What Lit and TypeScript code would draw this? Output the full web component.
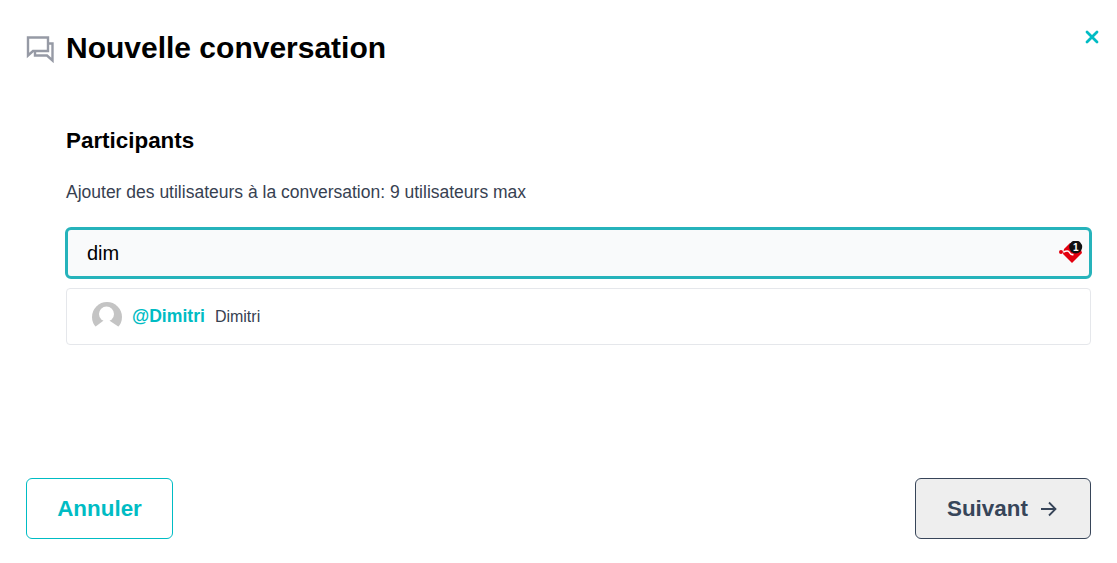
import { LitElement, html, css } from 'lit';
import { customElement, state } from 'lit/decorators.js';

@customElement('app-root')
export class AppRoot extends LitElement {
  @state() query = 'dim';

  static styles = css`
    :host {
      display: block;
      height: 563px;
      box-sizing: border-box;
      padding: 24px 26px 24px 26px;
      background: #fff;
      font-family: 'Liberation Sans', Arial, sans-serif;
      color: #000;
      overflow: hidden;
    }
    .dialog {
      height: 515px;
      display: flex;
      flex-direction: column;
    }
    .header {
      display: flex;
      align-items: center;
      height: 48px;
      gap: 12px;
    }
    .header-icon {
      width: 28px;
      height: 28px;
      flex: none;
      margin-top: 2px;
    }
    h1 {
      flex: 1;
      margin: 0;
      font-size: 30px;
      line-height: 48px;
      font-weight: 700;
    }
    .close {
      align-self: flex-start;
      width: 14px;
      height: 14px;
      margin: 6px -8px 0 0;
      padding: 0;
      border: 0;
      background: none;
      display: block;
    }
    .content {
      flex: 1;
      margin-left: 40px;
      padding-top: 55px;
    }
    h2 {
      margin: 0;
      font-size: 22.4px;
      line-height: 28px;
      font-weight: 700;
    }
    .hint {
      margin: 25px 0 0;
      font-size: 17.5px;
      line-height: 24px;
      color: #374151;
    }
    .field {
      position: relative;
      margin-top: 23px;
    }
    input {
      display: block;
      width: calc(100% + 2px);
      height: 52px;
      margin: 0 -1px;
      box-sizing: border-box;
      padding: 0 19px;
      border: 3px solid #26b3bb;
      border-radius: 6px;
      background: #f9fafb;
      outline: none;
      font: 20px 'Liberation Sans', Arial, sans-serif;
      color: #000;
    }
    .tag {
      position: absolute;
      right: 7px;
      top: 14px;
      width: 26px;
      height: 24px;
    }
    .results {
      margin-top: 9px;
      height: 57px;
      box-sizing: border-box;
      display: flex;
      align-items: center;
      gap: 10px;
      padding: 0 25px;
      border: 1px solid #e5e7eb;
      border-radius: 4px;
    }
    .avatar {
      width: 30px;
      height: 30px;
      flex: none;
    }
    .handle {
      font-size: 17.6px;
      font-weight: 700;
      color: #00bcc4;
    }
    .name {
      font-size: 16px;
      color: #374151;
    }
    .footer {
      display: flex;
      justify-content: space-between;
      align-items: center;
    }
    button.action {
      height: 61px;
      box-sizing: border-box;
      border-radius: 6px;
      font: 700 22.4px 'Liberation Sans', Arial, sans-serif;
      display: flex;
      align-items: center;
      padding: 0 31px;
    }
    .cancel {
      width: 147px;
      justify-content: center;
      border: 1px solid #00bcc4;
      background: #fff;
      color: #00bcc4;
    }
    .next {
      width: 176px;
      gap: 12px;
      border: 1px solid #374559;
      background: #eeeeee;
      color: #374559;
    }
    .next svg {
      width: 18px;
      height: 18px;
    }
  `;

  render() {
    return html`
      <div class="dialog">
        <div class="header">
          <svg class="header-icon" viewBox="0 0 28 28" fill="none" stroke="#969aa5" stroke-width="2.4">
            <path d="M2 2.500h20v13.500H7l-5 4.500z" />
            <path d="M22 8.500h4.500v17l-5.500-5H9v-4" />
          </svg>
          <h1>Nouvelle conversation</h1>
          <svg class="close" viewBox="0 0 14 14" stroke="#00bcc4" stroke-width="2.800" stroke-linecap="round">
            <path d="M2 2l10 10M12 2L2 12" />
          </svg>
        </div>
        <div class="content">
          <h2>Participants</h2>
          <p class="hint">Ajouter des utilisateurs à la conversation: 9 utilisateurs max</p>
          <div class="field">
            <input type="text" .value=${this.query} />
            <svg class="tag" viewBox="0 0 26 24">
              <circle cx="3" cy="11" r="2" fill="#e3000f" />
              <path d="M6 8l6-6h9l3 10-10 10-9-9z" fill="#e3000f" />
              <path d="M5.500 11c3-1.500 5-1.500 6 .5s2 2.500 4 2" fill="none" stroke="#fff" stroke-width="1.500" />
              <circle cx="17.700" cy="6" r="6.500" fill="#111" />
              <text x="17.700" y="9.500" font-size="10" font-weight="700" fill="#fff" text-anchor="middle"
                font-family="Liberation Sans">1</text>
            </svg>
          </div>
          <div class="results">
            <svg class="avatar" viewBox="0 0 30 30">
              <circle cx="15" cy="15" r="15" fill="#c4c4c4" />
              <circle cx="14.500" cy="12" r="7.500" fill="#fff" />
              <path d="M3 25l8-6h7l9 6v5H3z" fill="#fff" />
            </svg>
            <span class="handle">@Dimitri</span>
            <span class="name">Dimitri</span>
          </div>
        </div>
        <div class="footer">
          <button class="action cancel">Annuler</button>
          <button class="action next">
            Suivant
            <svg viewBox="0 0 18 18" fill="none" stroke="#374559" stroke-width="1.800">
              <path d="M1 9h15M9 2.500l6.500 6.500-6.500 6.500" />
            </svg>
          </button>
        </div>
      </div>
    `;
  }
}
